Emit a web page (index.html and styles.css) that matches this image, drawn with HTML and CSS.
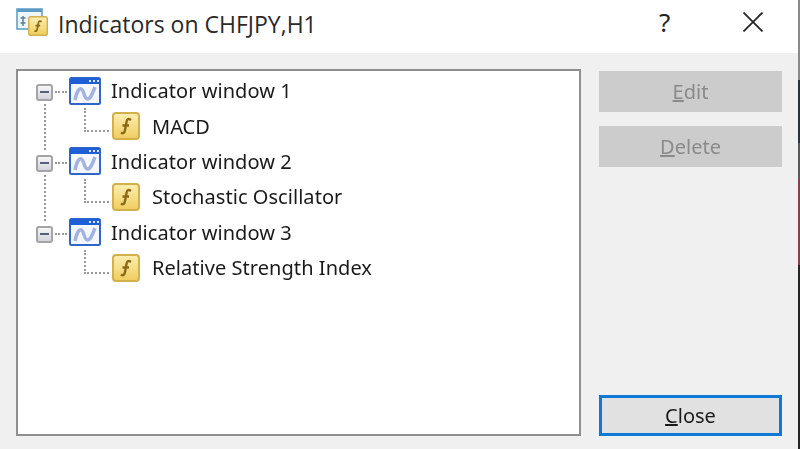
FILE: index.html
```html
<!DOCTYPE html>
<html lang="en">
<head>
    <meta charset="UTF-8">
    <meta name="viewport" content="width=device-width, initial-scale=1.0">
    <title>Indicators on CHFJPY,H1</title>
    <link rel="stylesheet" href="styles.css">
</head>
<body>
    <svg class="defs" width="0" height="0">
        <symbol id="icon-window" viewBox="0 0 32 28">
            <rect x="1" y="1" width="30" height="26" rx="1.5" fill="#f4f8fe" stroke="#2f66c8" stroke-width="2"/>
            <rect x="1" y="1" width="30" height="6" fill="#1f5fd6"/>
            <rect x="20" y="3" width="2" height="2" fill="#dce8fb"/>
            <rect x="24" y="3" width="2" height="2" fill="#dce8fb"/>
            <rect x="28" y="3" width="2" height="2" fill="#dce8fb"/>
            <path d="M6 23 C8 14 10 11 12.500 12 C15 13 15 22 18.500 22 C22 22 24 15 26 10" fill="none" stroke="#a3b3e0" stroke-width="3.500"/>
        </symbol>
        <symbol id="icon-func" viewBox="0 0 28 28">
            <defs>
                <linearGradient id="func-fill" x1="0" y1="0" x2="0" y2="1">
                    <stop offset="0" stop-color="#fcefb4"/>
                    <stop offset="1" stop-color="#f0cc5e"/>
                </linearGradient>
            </defs>
            <rect x="1" y="1" width="26" height="26" rx="3" fill="url(#func-fill)" stroke="#d2b04c" stroke-width="2"/>
            <path d="M19 8 C16 6 15 7.500 14.500 10 L13 18 C12.500 21 11 22 9 20.500 M10.500 13.500 H17" fill="none" stroke="#8a6a18" stroke-width="2.400"/>
        </symbol>
    </svg>

    <div class="dialog">
        <header class="titlebar">
            <svg class="app-icon" width="32" height="28" viewBox="0 0 32 28">
                <rect x="1" y="1" width="25" height="20" fill="#eef5fb" stroke="#5b9bc4" stroke-width="1.500"/>
                <rect x="1" y="1" width="25" height="3" fill="#5b9bc4"/>
                <path d="M7 8 V18 M4.500 10 H9.500 M4.500 15 H9.500 M13 10 H20" fill="none" stroke="#5d7f9c" stroke-width="1.500"/>
                <use href="#icon-func" x="12" y="8" width="20" height="20"/>
            </svg>
            <span class="title">Indicators on CHFJPY,H1</span>
            <span class="help">?</span>
            <svg class="close-x" width="20" height="20" viewBox="0 0 20 20">
                <path d="M0.500 0.500 L19.500 19.500 M19.500 0.500 L0.500 19.500" fill="none" stroke="#222" stroke-width="1.700"/>
            </svg>
        </header>

        <main class="content">
            <div class="tree">
                <div class="row parent has-next">
                    <span class="expander"></span>
                    <svg class="win-icon"><use href="#icon-window"/></svg>
                    <span class="label">Indicator window 1</span>
                </div>
                <div class="row child">
                    <svg class="func-icon"><use href="#icon-func"/></svg>
                    <span class="label">MACD</span>
                </div>
                <div class="row parent has-next">
                    <span class="expander"></span>
                    <svg class="win-icon"><use href="#icon-window"/></svg>
                    <span class="label">Indicator window 2</span>
                </div>
                <div class="row child">
                    <svg class="func-icon"><use href="#icon-func"/></svg>
                    <span class="label">Stochastic Oscillator</span>
                </div>
                <div class="row parent">
                    <span class="expander"></span>
                    <svg class="win-icon"><use href="#icon-window"/></svg>
                    <span class="label">Indicator window 3</span>
                </div>
                <div class="row child">
                    <svg class="func-icon"><use href="#icon-func"/></svg>
                    <span class="label">Relative Strength Index</span>
                </div>
            </div>

            <div class="actions">
                <button class="btn" disabled><u>E</u>dit</button>
                <button class="btn" disabled><u>D</u>elete</button>
                <button class="btn btn-default"><u>C</u>lose</button>
            </div>
        </main>
    </div>
</body>
</html>
```

FILE: styles.css
```css
* {
    margin: 0;
    padding: 0;
    box-sizing: border-box;
}

html, body {
    width: 800px;
    height: 449px;
    overflow: hidden;
}

body {
    font-family: "Noto Sans", "Open Sans", sans-serif;
    background: #f0f0f0;
    color: #1a1a1a;
}

.defs {
    position: absolute;
}

/* the strip on the right is whatever sat behind the dialog */
.dialog {
    height: 449px;
    display: flex;
    flex-direction: column;
    border-right: 2px solid #4a4a4a;
    border-image: linear-gradient(#8a8a8a 0 18%, #2c3240 18% 32%, #5a5a5a 32% 40%, #8a3f50 40% 59%, #262626 59% 100%) 1;
    filter: blur(0.4px);
}

/* title bar */
.titlebar {
    height: 53px;
    background: #fff;
    display: flex;
    align-items: center;
    padding-left: 16px;
}

.app-icon {
    margin-right: 10px;
    margin-top: -9px;
}

.title {
    font-family: "Open Sans", sans-serif;
    font-size: 23px;
    color: #2a2a2a;
    width: 601px;
    margin-top: -5px;
}

.help {
    font-size: 26px;
    width: 84px;
    margin-top: -9px;
    color: #222;
}

.close-x {
    margin-top: -9px;
}

/* main area */
.content {
    flex: 1;
    display: flex;
    padding: 16px 16px 13px 16px;
    gap: 18px;
}

.tree {
    width: 565px;
    height: 367px;
    background: #fff;
    border: 2px solid #8f8f8f;
    padding-top: 2px;
}

.row {
    height: 35.4px;
    display: flex;
    align-items: center;
    position: relative;
    font-size: 20px;
}

.parent {
    padding-left: 18px;
}

.child {
    padding-left: 94px;
}

.expander {
    width: 17px;
    height: 17px;
    border: 2px solid #a4a4a4;
    border-radius: 3px;
    background: linear-gradient(#f6f6f6, #d4d6dc);
    margin-right: 16px;
    margin-top: 4px;
    position: relative;
}

/* minus sign */
.expander:before {
    content: "";
    position: absolute;
    left: 2px;
    right: 2px;
    top: 5px;
    height: 2px;
    background: #56627c;
}

/* dots from the expander to the window icon */
.expander:after {
    content: "";
    position: absolute;
    left: 17px;
    top: 5px;
    width: 12px;
    border-top: 2px dotted #9a9a9a;
}

/* dots down to the next window row */
.has-next:before {
    content: "";
    position: absolute;
    left: 26px;
    top: 31px;
    height: 46px;
    border-left: 2px dotted #9a9a9a;
}

/* elbow from the window icon to the child icon */
.child:before {
    content: "";
    position: absolute;
    left: 66px;
    top: 0;
    width: 23px;
    height: 22px;
    border-left: 2px dotted #9a9a9a;
    border-bottom: 2px dotted #9a9a9a;
}

.win-icon {
    width: 32px;
    height: 28px;
    margin-right: 10px;
    flex-shrink: 0;
}

.func-icon {
    width: 28px;
    height: 28px;
    margin-right: 12px;
    flex-shrink: 0;
}

.label {
    white-space: nowrap;
    letter-spacing: 0.05px;
}

/* buttons */
.actions {
    width: 183px;
    display: flex;
    flex-direction: column;
    gap: 14px;
    padding-top: 2px;
}

.btn {
    height: 41px;
    font-family: "Noto Sans", sans-serif;
    font-size: 20px;
    background: #cccccc;
    color: #8a8a8a;
    border: none;
}

.btn-default {
    margin-top: auto;
    background: #e1e1e1;
    color: #1a1a1a;
    border: 3px solid #0f78d4;
}
```
